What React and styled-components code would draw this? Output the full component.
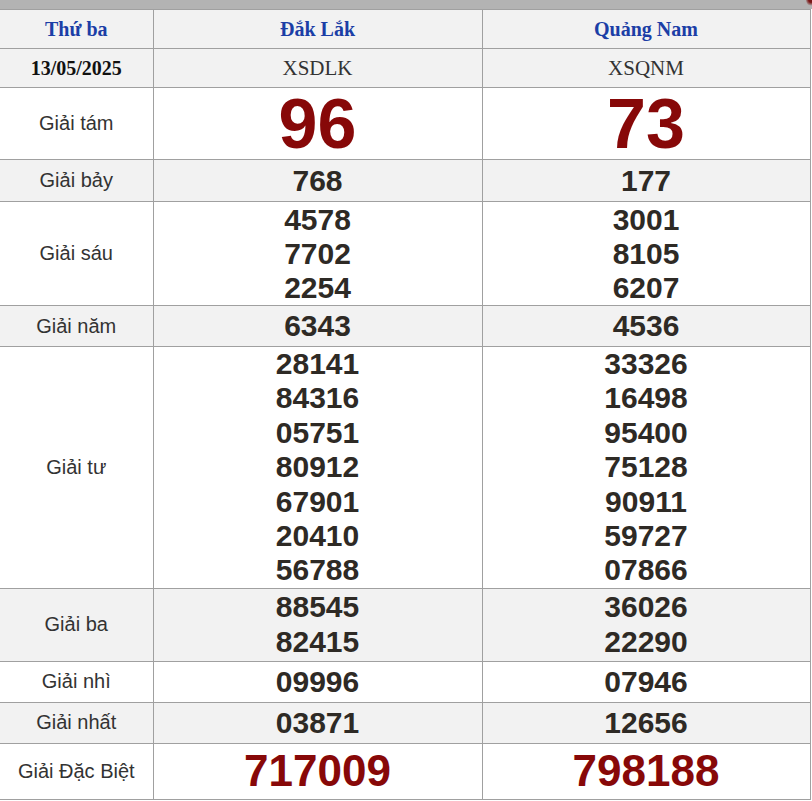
import styled, { createGlobalStyle } from "styled-components";

const GlobalStyle = createGlobalStyle`
  html, body {
    margin: 0;
    padding: 0;
    background: #ffffff;
  }
`;

const Wrapper = styled.div`
  width: 812px;
  overflow: hidden;
`;

const TopStrip = styled.div`
  position: relative;
  height: 9px;
  background: #b3b3b3;
  &::after {
    content: "";
    position: absolute;
    right: -4px;
    top: -6px;
    width: 10px;
    height: 12px;
    border-radius: 50%;
    background: radial-gradient(circle, #7a1515 30%, rgba(122, 21, 21, 0) 75%);
  }
`;

const Table = styled.table`
  width: 810px;
  border-collapse: collapse;
  table-layout: fixed;
  td {
    border: 1px solid #a0a0a0;
    text-align: center;
    vertical-align: middle;
    padding: 0;
  }
  tr td:first-child {
    border-left: none;
  }
`;

const Row = styled.tr`
  background: ${(p) => (p.$alt ? "#f2f2f2" : "#ffffff")};
  height: ${(p) => p.$h || 41}px;
`;

const HeadCell = styled.td`
  font-family: "Liberation Serif", "Times New Roman", serif;
  font-size: 20px;
  font-weight: bold;
  color: ${(p) => (p.$blue ? "#1b3ea6" : "#111111")};
`;

const CodeCell = styled.td`
  font-family: "Liberation Serif", "Times New Roman", serif;
  font-size: 21px;
  color: #333333;
`;

const LabelCell = styled.td`
  font-family: "Liberation Sans", Arial, sans-serif;
  font-size: 20px;
  color: #333333;
`;

const NumCell = styled.td``;

const Num = styled.div`
  font-family: "Liberation Sans", Arial, sans-serif;
  font-weight: bold;
  font-size: ${(p) => p.$size || 30}px;
  line-height: ${(p) => p.$lh || 34}px;
  color: ${(p) => (p.$red ? "#870808" : "#2e2a25")};
`;

const prizes = [
  { name: "Giải tám", a: ["96"], b: ["73"], size: 70, lh: 66, red: true, h: 72 },
  { name: "Giải bảy", a: ["768"], b: ["177"], h: 42 },
  { name: "Giải sáu", a: ["4578", "7702", "2254"], b: ["3001", "8105", "6207"], h: 104 },
  { name: "Giải năm", a: ["6343"], b: ["4536"] },
  {
    name: "Giải tư",
    a: ["28141", "84316", "05751", "80912", "67901", "20410", "56788"],
    b: ["33326", "16498", "95400", "75128", "90911", "59727", "07866"],
    lh: 34.4,
    h: 241,
  },
  { name: "Giải ba", a: ["88545", "82415"], b: ["36026", "22290"], lh: 34.5, h: 73 },
  { name: "Giải nhì", a: ["09996"], b: ["07946"] },
  { name: "Giải nhất", a: ["03871"], b: ["12656"] },
  { name: "Giải Đặc Biệt", a: ["717009"], b: ["798188"], size: 44, lh: 50, red: true, h: 56 },
];

export default function App() {
  return (
    <Wrapper>
      <GlobalStyle />
      <TopStrip />
      <Table>
        <colgroup>
          <col style={{ width: 153 }} />
          <col style={{ width: 329 }} />
          <col style={{ width: 328 }} />
        </colgroup>
        <tbody>
          <Row $alt $h={39}>
            <HeadCell $blue>Thứ ba</HeadCell>
            <HeadCell $blue>Đắk Lắk</HeadCell>
            <HeadCell $blue>Quảng Nam</HeadCell>
          </Row>
          <Row $alt $h={39}>
            <HeadCell>13/05/2025</HeadCell>
            <CodeCell>XSDLK</CodeCell>
            <CodeCell>XSQNM</CodeCell>
          </Row>
          {prizes.map((p, i) => (
            <Row key={p.name} $alt={i % 2 === 1} $h={p.h}>
              <LabelCell>{p.name}</LabelCell>
              <NumCell>
                {p.a.map((n, k) => (
                  <Num key={k} $size={p.size} $lh={p.lh} $red={p.red}>
                    {n}
                  </Num>
                ))}
              </NumCell>
              <NumCell>
                {p.b.map((n, k) => (
                  <Num key={k} $size={p.size} $lh={p.lh} $red={p.red}>
                    {n}
                  </Num>
                ))}
              </NumCell>
            </Row>
          ))}
        </tbody>
      </Table>
    </Wrapper>
  );
}
